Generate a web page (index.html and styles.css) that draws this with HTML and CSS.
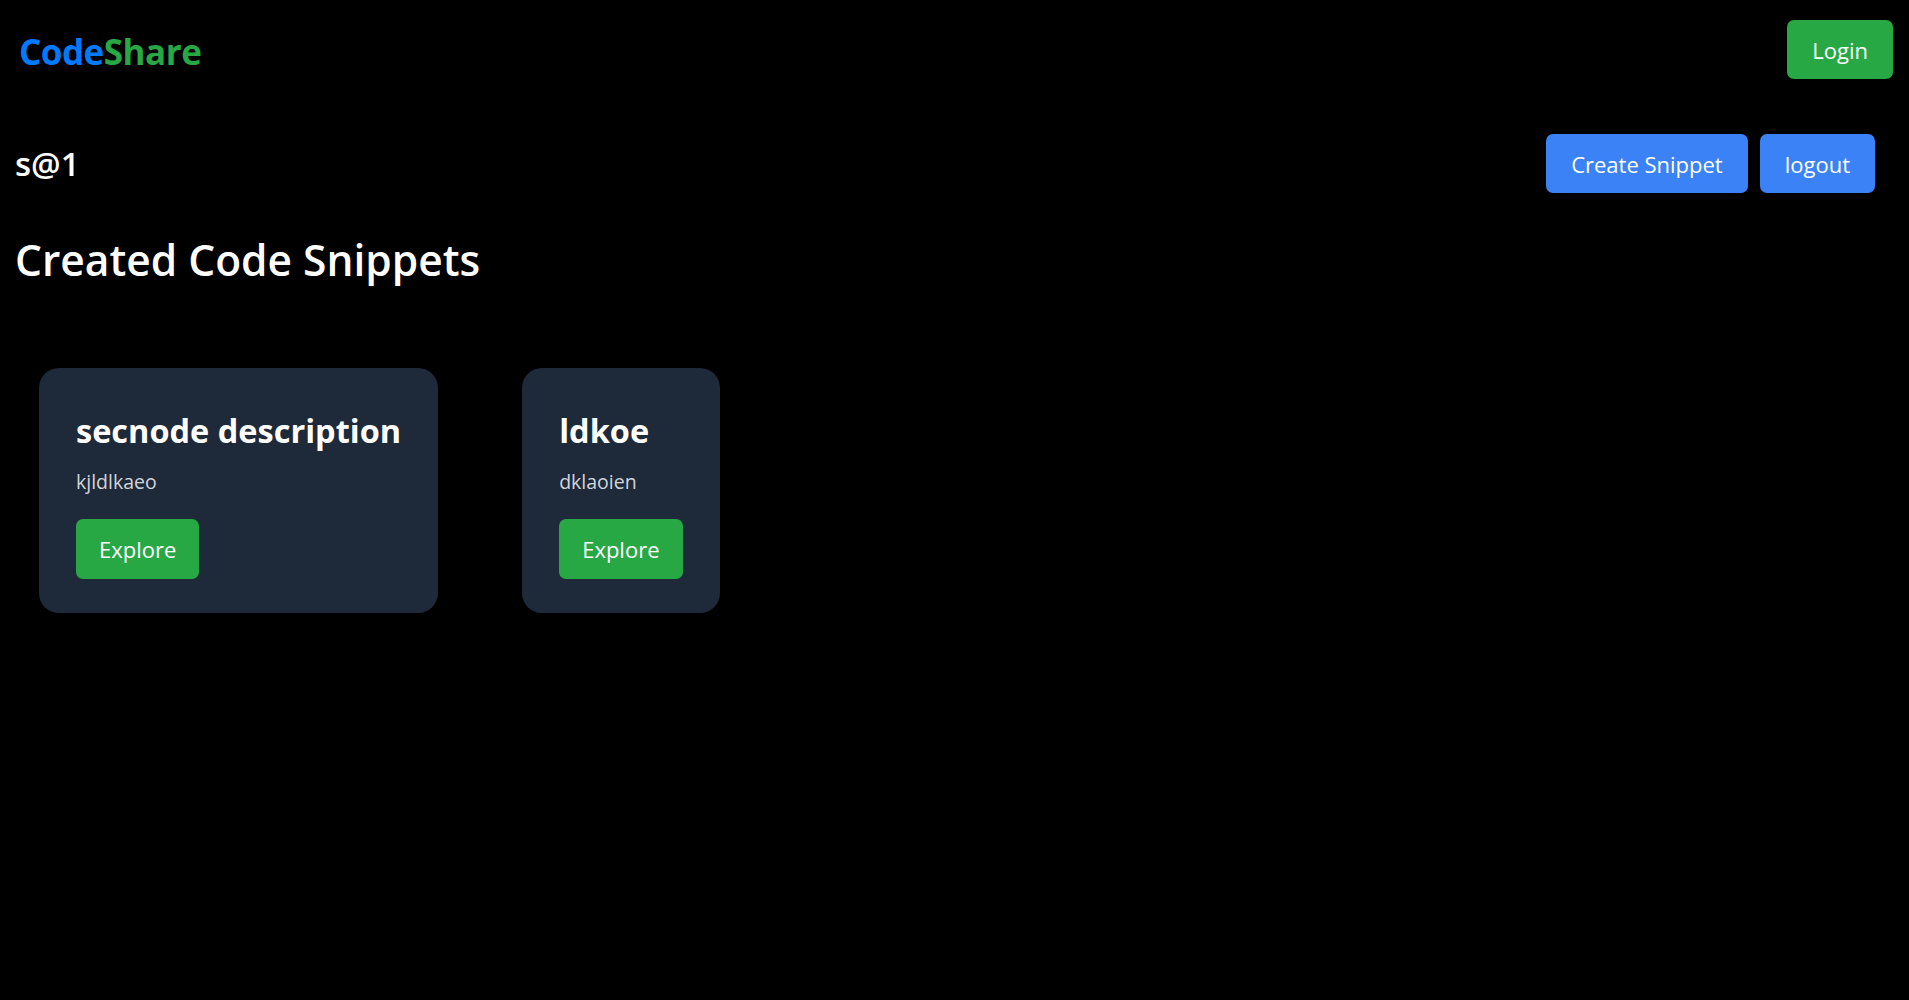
FILE: index.html
```html
<!DOCTYPE html>
<html lang="en">
<head>
<meta charset="utf-8">
<title>CodeShare</title>
<link rel="stylesheet" href="styles.css">
</head>
<body>
<header class="topbar">
  <a class="logo" href="#"><span class="logo-code">Code</span><span class="logo-share">Share</span></a>
  <button class="btn btn-green btn-login">Login</button>
</header>
<main class="page">
  <div class="user-row">
    <h2 class="username">s@1</h2>
    <div class="actions">
      <button class="btn btn-blue">Create Snippet</button>
      <button class="btn btn-blue">logout</button>
    </div>
  </div>
  <h1 class="section-title">Created Code Snippets</h1>
  <div class="cards">
    <div class="card">
      <h3 class="card-title">secnode description</h3>
      <p class="card-desc">kjldlkaeo</p>
      <button class="btn btn-green btn-explore">Explore</button>
    </div>
    <div class="card">
      <h3 class="card-title">ldkoe</h3>
      <p class="card-desc">dklaoien</p>
      <button class="btn btn-green btn-explore">Explore</button>
    </div>
  </div>
</main>
</body>
</html>
```
FILE: styles.css
```css
* { box-sizing: border-box; }
html, body { margin: 0; padding: 0; }
body {
  background: #000;
  color: #fff;
  font-family: "Open Sans", "Noto Sans", sans-serif;
  min-height: 1000px;
}
.topbar {
  display: flex;
  justify-content: space-between;
  align-items: center;
  padding: 20px 16px 20px 19px;
}
.logo {
  text-decoration: none;
  font-size: 35px;
  font-weight: 700;
  letter-spacing: -0.5px;
  padding-top: 4px;
}
.logo-code { color: #007bff; }
.logo-share { color: #28a745; }
.btn {
  display: inline-flex;
  align-items: center;
  justify-content: center;
  height: 59px;
  padding: 0 25px;
  border: none;
  border-radius: 7px;
  color: #fff;
  font-family: inherit;
  font-size: 22px;
  cursor: pointer;
}
.btn-green { background: #28a745; }
.btn-blue { background: #3b82f6; }
.page { padding: 0 34px 0 15px; }
.user-row {
  display: flex;
  justify-content: space-between;
  align-items: center;
  margin-top: 35px;
}
.username {
  margin: 0;
  font-size: 33px;
  font-weight: 600;
  line-height: 1.2;
}
.actions { display: flex; gap: 12px; }
.section-title {
  margin: 38px 0 0;
  font-size: 42.5px;
  font-weight: 600;
}
.cards {
  display: flex;
  align-items: flex-start;
  gap: 84px;
  margin-top: 80px;
  padding-left: 24px;
}
.card {
  background: #1e2939;
  border-radius: 20px;
  padding: 42px 37px 34px;
}
.card-title {
  margin: 0;
  font-size: 32.5px;
  font-weight: 700;
  line-height: 1.3;
}
.card-desc {
  margin: 16px 0 24px;
  font-size: 19.5px;
  color: #d1d5dc;
}
.btn-explore { height: 60px; padding: 0 23px; }
```
